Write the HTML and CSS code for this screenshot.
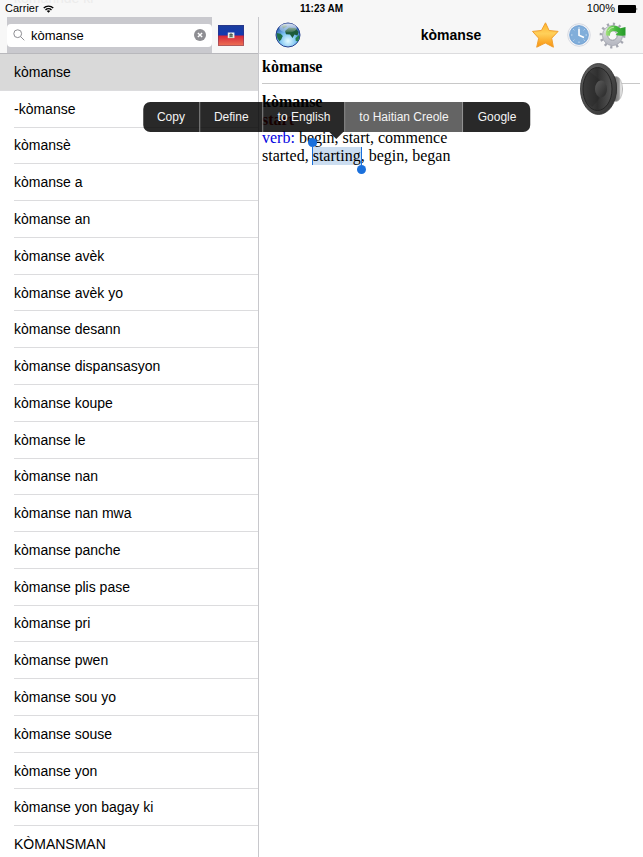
FILE: index.html
```html
<!DOCTYPE html>
<html lang="ht">
<head>
  <meta charset="UTF-8">
  <title>kòmanse</title>
  <meta name="viewport" content="width=device-width, initial-scale=1">
  <link rel="stylesheet" href="styles.css">
</head>
<body>
  <div class="status-bar">
    <div class="scrolled-word" aria-hidden="true">kòmannde ki</div>
    <div class="carrier">
      <span>Carrier</span>
      <svg width="11" height="8" viewBox="0 0 22 16" fill="none" stroke="#000" stroke-width="2.8">
        <path d="M1.5 6.2a13.5 13.5 0 0 1 19 0"/>
        <path d="M5 9.8a8.5 8.5 0 0 1 12 0"/>
        <path d="M11 15.5L7.6 12.2a4.8 4.8 0 0 1 6.8 0z" fill="#000" stroke="none"/>
      </svg>
    </div>
    <div class="time">11:23 AM</div>
    <div class="battery">
      <span>100%</span>
      <svg width="20" height="8" viewBox="0 0 20 8">
        <rect width="18" height="8" rx="1"/>
        <path d="M18.6 2.5q1.4 1.5 0 3z"/>
      </svg>
    </div>
  </div>

  <div class="split">
    <aside class="sidebar">
      <div class="search-bar">
        <div class="search-wrap">
          <div class="search-field">
            <svg width="12" height="12" viewBox="0 0 12 12" fill="none" stroke="#8e8e93">
              <circle cx="4.7" cy="4.7" r="3.9"/>
              <path d="M7.6 7.6L11.3 11.3"/>
            </svg>
            <input type="text" value="kòmanse" aria-label="Search">
            <button class="clear" aria-label="Clear">
              <svg width="12" height="12" viewBox="0 0 12 12">
                <circle cx="6" cy="6" r="6" fill="#8e8e93"/>
                <path d="M3.9 3.9l4.2 4.2M8.1 3.9L3.9 8.1" stroke="#fff" stroke-width="1.4"/>
              </svg>
            </button>
          </div>
        </div>
        <button class="icon-button" aria-label="Haitian Creole">
          <svg width="26" height="21" viewBox="0 0 26 21">
            <defs>
              <linearGradient id="flagBlue" x2="0" y2="1">
                <stop offset="0" stop-color="#1b3e9c"/>
                <stop offset="1" stop-color="#1238b4"/>
              </linearGradient>
              <linearGradient id="flagRed" x2="0" y2="1">
                <stop offset="0" stop-color="#d5253a"/>
                <stop offset="1" stop-color="#ee7455"/>
              </linearGradient>
            </defs>
            <rect width="26" height="11" fill="url(#flagBlue)"/>
            <rect y="10.5" width="26" height="10.5" fill="url(#flagRed)"/>
            <rect x="9.8" y="7.5" width="6.6" height="5.6" fill="#eef0ea"/>
            <path d="M10.5 12.3q2.6-1.8 5.2 0z" fill="#4c8a50"/>
            <path d="M13 8.2v3.8M11.4 9.6h3.4M11.2 11h3.8" stroke="#45584f"/>
            <rect x=".5" y=".5" width="25" height="20" fill="none" stroke="#46306a" stroke-opacity=".35"/>
          </svg>
        </button>
      </div>

      <ul class="word-list">
        <li class="selected">kòmanse</li>
        <li>-kòmanse</li>
        <li>kòmansè</li>
        <li>kòmanse a</li>
        <li>kòmanse an</li>
        <li>kòmanse avèk</li>
        <li>kòmanse avèk yo</li>
        <li>kòmanse desann</li>
        <li>kòmanse dispansasyon</li>
        <li>kòmanse koupe</li>
        <li>kòmanse le</li>
        <li>kòmanse nan</li>
        <li>kòmanse nan mwa</li>
        <li>kòmanse panche</li>
        <li>kòmanse plis pase</li>
        <li>kòmanse pri</li>
        <li>kòmanse pwen</li>
        <li>kòmanse sou yo</li>
        <li>kòmanse souse</li>
        <li>kòmanse yon</li>
        <li>kòmanse yon bagay ki</li>
        <li>KÒMANSMAN</li>
      </ul>
    </aside>

    <main class="detail">
      <header class="toolbar">
        <div class="tools">
          <button class="icon-button" aria-label="Web">
            <svg width="26" height="26" viewBox="0 0 26 26">
              <defs>
                <radialGradient id="sea" cx=".5" cy=".75" r=".75">
                  <stop offset="0" stop-color="#e4fbff"/>
                  <stop offset=".45" stop-color="#7cc3f2"/>
                  <stop offset="1" stop-color="#1b4da4"/>
                </radialGradient>
                <linearGradient id="gloss" x2="0" y2="1">
                  <stop offset="0" stop-color="#fff" stop-opacity=".85"/>
                  <stop offset="1" stop-color="#fff" stop-opacity=".1"/>
                </linearGradient>
              </defs>
              <circle cx="13" cy="13" r="12" fill="url(#sea)" stroke="#27418f"/>
              <path d="M1.6 11l4 .8 2.200 2.200-1.5 3.200-1.8 2.400Q1.6 16 1.6 11z" fill="#1f7048"/>
              <path d="M10 9l4-3.5 6.5.5 3 4-1 3.500-3-1-2 3.500-2.500-3.500-4-.2z" fill="#1c5a3a"/>
              <path d="M20.5 16l3.500-3 .5 2.500-1.8 4-2-.8z" fill="#26804c"/>
              <path d="M7 4l4-2 1 2.400-4 2.200z" fill="#2d6a4d"/>
              <ellipse cx="13" cy="6" rx="8.800" ry="4.500" fill="url(#gloss)"/>
            </svg>
          </button>
        </div>
        <h1>kòmanse</h1>
        <div class="tools right">
          <button class="icon-button" aria-label="Favorites">
            <svg width="28" height="28" viewBox="0 0 28 28">
              <defs>
                <linearGradient id="star" x2="0" y2="1">
                  <stop offset="0" stop-color="#ffb52e"/>
                  <stop offset=".45" stop-color="#ffd05a"/>
                  <stop offset="1" stop-color="#f9920c"/>
                </linearGradient>
              </defs>
              <path d="M14.500 1.8l3.600 7.700 9 .9-6.400 6.800 1.700 9L14.300 22l-8.600 4.200 2-9L1.5 10.400l8.900-.9z" fill="url(#star)" stroke="#f0a030" stroke-linejoin="round"/>
            </svg>
          </button>
          <button class="icon-button" aria-label="History">
            <svg width="24" height="26" viewBox="0 0 24 26">
              <circle cx="12" cy="13" r="11.300" fill="#f4f5f8" stroke="#cfd3dc" stroke-width=".8"/>
              <circle cx="12" cy="13" r="9.400" fill="#81aeda" stroke="#6c9dd0" stroke-width=".8"/>
              <path d="M12 5v1.500M12 19.500V21M4 13h1.500M18.500 13H20M6.300 7.300l1 1M17.700 7.300l-1 1M6.300 18.700l1-1M17.700 18.700l-1-1" stroke="#c7dcf1"/>
              <path d="M12 6.800V13.300l5 2.200" fill="none" stroke="#fff" stroke-width="1.600"/>
            </svg>
          </button>
          <button class="icon-button" aria-label="Settings">
            <svg width="28" height="28" viewBox="0 0 28 28">
              <defs>
                <linearGradient id="gear" x2="0" y2="1">
                  <stop offset="0" stop-color="#e4e5e8"/>
                  <stop offset="1" stop-color="#b9bbc4"/>
                </linearGradient>
                <linearGradient id="leaf" x2="1" y2="0">
                  <stop offset="0" stop-color="#a5e07e"/>
                  <stop offset=".5" stop-color="#45b93d"/>
                  <stop offset="1" stop-color="#259a2a"/>
                </linearGradient>
              </defs>
              <circle cx="13.5" cy="14.5" r="11.400" fill="none" stroke="#a4a6b0" stroke-width="3" stroke-dasharray="2.200 3.769"/>
              <circle cx="13.5" cy="14.5" r="7.400" fill="none" stroke="url(#gear)" stroke-width="5.500"/>
              <circle cx="13.5" cy="14.5" r="10" fill="none" stroke="#a2a4ae" stroke-width=".8"/>
              <circle cx="13.5" cy="14.5" r="4.700" fill="#f7f7f7" stroke="#888a96" stroke-width=".8"/>
              <path d="M7 14.500C6 8.500 10 4.500 14.500 4.500q4 0 6.700 2.800L26.500 6v8.500q-6 .8-10-.5l2.500-2.400q-2-2-4.500-1.600-4 .8-3.500 4.800z" fill="url(#leaf)"/>
              <path d="M9 10q2-4 6-3.800" fill="none" stroke="#d9f5c4" stroke-opacity=".7"/>
            </svg>
          </button>
        </div>
      </header>

      <article class="entry">
        <h2>kòmanse</h2>
        <hr>
        <button class="icon-button speaker" aria-label="Listen">
          <svg width="46" height="54" viewBox="0 0 46 54">
            <defs>
              <linearGradient id="magnet" x2="1" y2="0">
                <stop offset="0" stop-color="#444"/>
                <stop offset=".75" stop-color="#999"/>
                <stop offset=".9" stop-color="#fff"/>
                <stop offset="1" stop-color="#8b8b8b"/>
              </linearGradient>
              <linearGradient id="rim" x2="1" y2="1">
                <stop offset="0" stop-color="#606060"/>
                <stop offset=".5" stop-color="#4c4c4c"/>
                <stop offset="1" stop-color="#303030"/>
              </linearGradient>
              <linearGradient id="cone" x2="1" y2="0">
                <stop offset="0" stop-color="#484848"/>
                <stop offset=".5" stop-color="#303030"/>
                <stop offset="1" stop-color="#555"/>
              </linearGradient>
              <linearGradient id="cap" x2="1" y2="1">
                <stop offset="0" stop-color="#5e5e5e"/>
                <stop offset="1" stop-color="#282828"/>
              </linearGradient>
            </defs>
            <ellipse cx="37" cy="27" rx="6.500" ry="12.500" fill="url(#magnet)" stroke="#aaa" stroke-width=".6"/>
            <path d="M26 5l10 10q4 12 0 21L26 48z" fill="#3a3a3a"/>
            <ellipse cx="19.500" cy="27" rx="18" ry="25.500" fill="url(#rim)" stroke="#303030" stroke-width=".8"/>
            <ellipse cx="18.500" cy="27" rx="14.500" ry="21.500" fill="url(#cone)" stroke="#252525"/>
            <path d="M10 9l12 10-2 18-7 8Q4 40 4.500 27 5 14 10 9z" fill="#222" opacity=".3"/>
            <ellipse cx="22" cy="27" rx="6" ry="8.500" fill="url(#cap)"/>
          </svg>
        </button>
        <h3>kòmanse</h3>
        <h3 class="translation">start</h3>
        <p><span class="part">verb:</span> begin, start, commence</p>
        <p>started, <span class="selection">starting<span class="menu">
          <button>Copy</button>
          <button>Define</button>
          <button>to English</button>
          <button class="active">to Haitian Creole</button>
          <button>Google</button>
        </span></span>, begin, began</p>
      </article>
    </main>
  </div>
</body>
</html>
```
FILE: styles.css
```css
* {
  box-sizing: border-box;
}

body {
  display: flex;
  flex-direction: column;
  height: 100vh;
  margin: 0;
  overflow: hidden;
  background: #fff;
  color: #000;
  font-family: "Liberation Sans", Arial, sans-serif;
}

button {
  border: none;
  background: none;
  padding: 0;
  font-family: inherit;
  cursor: pointer;
}

svg {
  display: block;
}

/* status bar */
.status-bar {
  position: relative;
  display: grid;
  grid-template-columns: 1fr auto 1fr;
  align-items: center;
  flex: none;
  height: 17px;
  padding: 0 5px;
  background: #f7f7f7;
  font-size: 11px;
  line-height: 17px;
}

/* list row showing through the bar */
.scrolled-word {
  position: absolute;
  top: -10px;
  left: 14px;
  color: #ececec;
  font-size: 14px;
}

.carrier,
.battery {
  position: relative;
  display: flex;
  align-items: center;
  gap: 4px;
}

.battery {
  justify-content: flex-end;
  gap: 3px;
}

.time {
  font-size: 10px;
  font-weight: bold;
}

.split {
  display: flex;
  flex: 1;
  min-height: 0;
}

/* word list */
.sidebar {
  flex: none;
  width: 259px;
  border-right: 1px solid #c8c8cc;
}

.search-bar {
  display: flex;
  align-items: center;
  gap: 6px;
  height: 37px;
  padding-left: 7px;
  background: #f7f7f7;
  border-bottom: 1px solid #b8b8bc;
}

.search-wrap {
  display: flex;
  align-items: center;
  width: 205px;
  height: 100%;
  background: #c9c9ce;
}

.search-field {
  display: flex;
  align-items: center;
  gap: 6px;
  width: 100%;
  height: 23px;
  padding: 0 6px;
  background: #fff;
  border-radius: 4px;
}

.search-field input {
  flex: 1;
  min-width: 0;
  border: none;
  outline: none;
  padding: 0;
  background: none;
  font-family: inherit;
  font-size: 13px;
}

.word-list {
  display: grid;
  grid-auto-rows: 1fr;
  height: calc(100vh - 48px);
  margin: 0;
  padding: 0;
  list-style: none;
  font-size: 14px;
}

.word-list li {
  display: flex;
  align-items: center;
  margin-left: 14px;
  border-bottom: 1px solid #dcdcde;
}

.word-list .selected {
  margin-left: 0;
  padding-left: 14px;
  background: #d9d9d9;
}

/* entry */
.detail {
  flex: 1;
  min-width: 0;
}

.toolbar {
  display: grid;
  grid-template-columns: 1fr auto 1fr;
  align-items: center;
  height: 37px;
  padding: 0 16px;
  background: #f7f7f7;
  border-bottom: 1px solid #dcdcde;
}

.toolbar h1 {
  margin: 0;
  font-size: 14px;
}

.tools {
  display: flex;
  align-items: center;
  gap: 8px;
}

.tools.right {
  justify-content: flex-end;
}

.entry {
  position: relative;
  padding: 4px 3px;
  font-family: "Liberation Serif", "Times New Roman", serif;
  font-size: 16px;
  line-height: 18px;
}

.entry h2,
.entry h3 {
  margin: 0;
  font-size: 16px;
}

.entry hr {
  margin: 7px 0 9px;
  border: none;
  border-top: 1px solid #c8c8c8;
}

.entry p {
  margin: 0;
}

.entry .translation {
  color: #8b0000;
}

.part {
  color: #0000e0;
}

.speaker {
  position: absolute;
  top: 8px;
  right: 18px;
}

/* text selection with its handles */
.selection {
  position: relative;
  display: inline-block;
  background: #cbddf0;
  box-shadow: -1px 0 #1a70dc, 1px 0 #1a70dc;
}

.selection::before,
.selection::after {
  content: "";
  position: absolute;
  width: 9px;
  height: 9px;
  border-radius: 50%;
  background: #1a70dc;
}

.selection::before {
  top: -9px;
  left: -5px;
}

.selection::after {
  bottom: -9px;
  right: -5px;
}

.menu {
  position: absolute;
  bottom: 33px;
  left: 50%;
  display: flex;
  height: 30px;
  transform: translateX(-50%);
  font-family: "Liberation Sans", Arial, sans-serif;
}

.menu::after {
  content: "";
  position: absolute;
  top: 100%;
  left: 50%;
  margin-left: -7px;
  border: 7px solid transparent;
  border-top-color: rgba(0, 0, 0, 0.84);
  border-bottom: none;
}

.menu button {
  padding: 0 14px;
  background: rgba(0, 0, 0, 0.84);
  color: #f4f4f4;
  font-size: 12px;
  white-space: nowrap;
}

.menu button + button {
  border-left: 1px solid #808080;
}

.menu button:first-child {
  border-radius: 7px 0 0 7px;
}

.menu button:last-child {
  border-radius: 0 7px 7px 0;
}

.menu .active {
  background: rgba(70, 70, 70, 0.84);
}
```
